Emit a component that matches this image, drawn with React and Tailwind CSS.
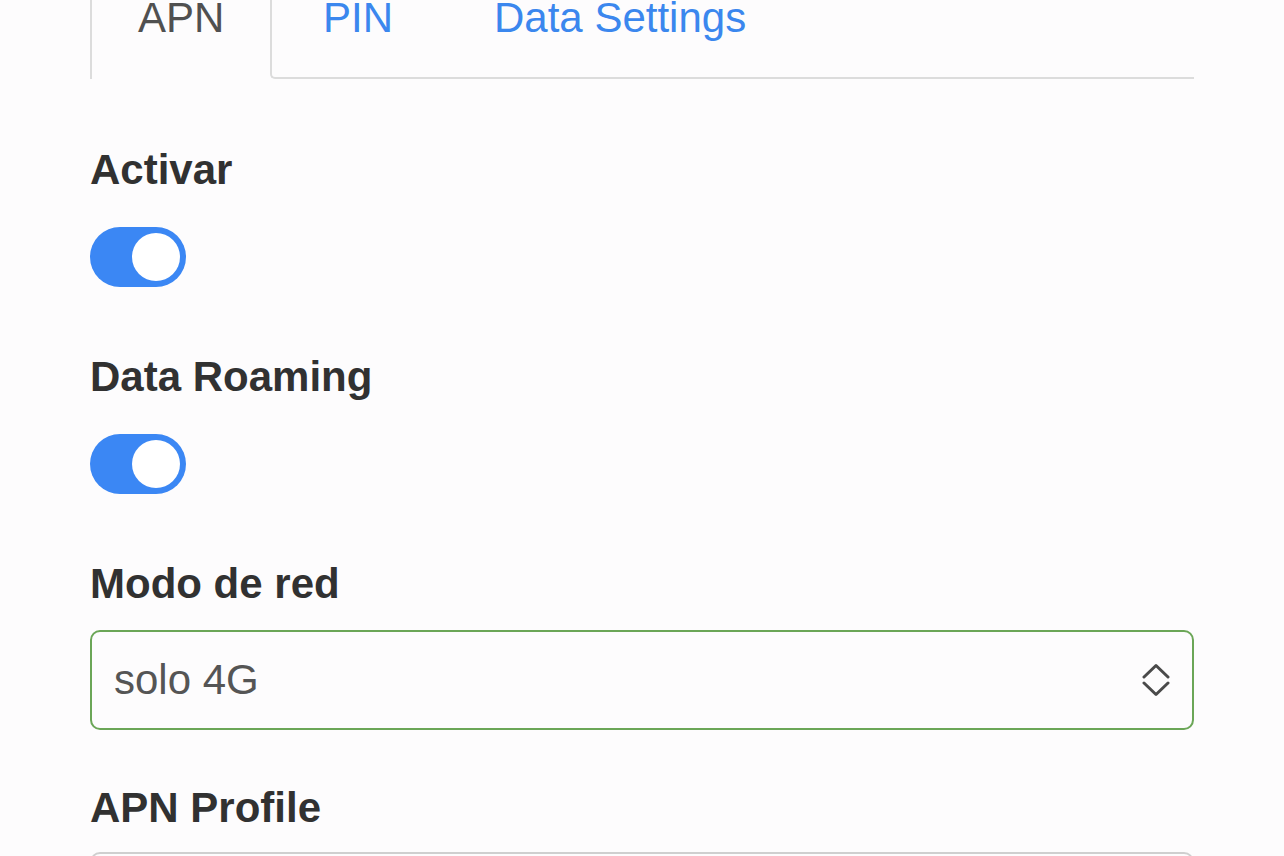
import React, { useState } from "react";

const FONT = { fontFamily: '"Liberation Sans", Arial, Helvetica, sans-serif' };

const Toggle = ({ on, onChange }) => (
  <button
    type="button"
    onClick={() => onChange(!on)}
    className={`flex items-center w-[96px] h-[60px] rounded-full p-[6px] ${on ? "bg-[#3b87f4] justify-end" : "bg-[#d9d9d9] justify-start"}`}
  >
    <span className="block w-[48px] h-[48px] rounded-full bg-white" />
  </button>
);

const Label = ({ children }) => (
  <div className="text-[42px] leading-[48px] font-bold text-[#313131]">{children}</div>
);

const App = () => {
  const [active, setActive] = useState(true);
  const [roaming, setRoaming] = useState(true);
  const [mode] = useState("solo 4G");

  return (
    <div className="min-h-screen bg-[#fdfcfd] overflow-hidden" style={FONT}>
      <div className="ml-[90px] w-[1104px]">
        {/* tabs */}
        <div className="flex h-[79px] text-[42px] leading-[35px]">
          <div className="w-[180px] border-l-2 border-[#dcdcdc] pl-[46px] text-[#505050]">APN</div>
          <div className="flex-1 flex border-l-2 border-b-2 border-[#dcdcdc] rounded-bl-[5px] text-[#3b87ee]">
            <span className="ml-[51px]">PIN</span>
            <span className="ml-[101px]">Data Settings</span>
          </div>
        </div>

        <div className="mt-[67px]">
          <Label>Activar</Label>
          <div className="mt-[33px]">
            <Toggle on={active} onChange={setActive} />
          </div>
        </div>

        <div className="mt-[66px]">
          <Label>Data Roaming</Label>
          <div className="mt-[33px]">
            <Toggle on={roaming} onChange={setRoaming} />
          </div>
        </div>

        <div className="mt-[66px]">
          <Label>Modo de red</Label>
          <div className="mt-[22px] flex items-center justify-between h-[100px] border-2 border-[#6ba657] rounded-[10px] pl-[22px] pr-[22px]">
            <span className="text-[42px] leading-[48px] text-[#555555]">{mode}</span>
            <svg width="28" height="34" viewBox="0 0 28 34" fill="none" stroke="#4a4a4a" strokeWidth="3" strokeLinecap="round" strokeLinejoin="round">
              <polyline points="2,14 14,2.5 26,14" />
              <polyline points="2,20 14,31.5 26,20" />
            </svg>
          </div>
        </div>

        <div className="mt-[54px]">
          <Label>APN Profile</Label>
          <div className="mt-[20px] h-[100px] border-2 border-[#cfcfcf] rounded-[10px]" />
        </div>
      </div>
    </div>
  );
};

export default App;
